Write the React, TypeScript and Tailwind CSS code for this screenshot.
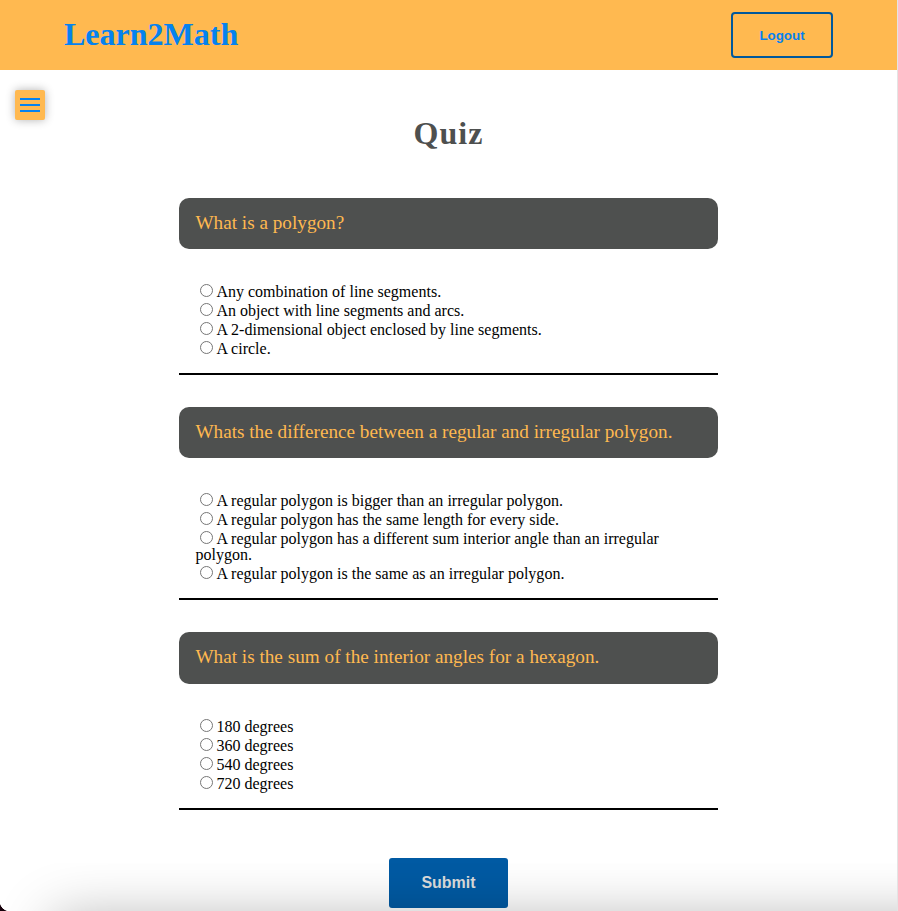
const questions = [
  {
    title: 'What is a polygon?',
    options: [
      'Any combination of line segments.',
      'An object with line segments and arcs.',
      'A 2-dimensional object enclosed by line segments.',
      'A circle.',
    ],
  },
  {
    title: 'Whats the difference between a regular and irregular polygon.',
    options: [
      'A regular polygon is bigger than an irregular polygon.',
      'A regular polygon has the same length for every side.',
      'A regular polygon has a different sum interior angle than an irregular polygon.',
      'A regular polygon is the same as an irregular polygon.',
    ],
  },
  {
    title: 'What is the sum of the interior angles for a hexagon.',
    options: ['180 degrees', '360 degrees', '540 degrees', '720 degrees'],
  },
];

function Header() {
  return (
    <header className="flex h-[70px] items-center justify-between bg-[#ffb950] px-16">
      <h1 className="pb-0.5 text-[32px] leading-8 font-bold text-[#0582ef]">Learn2Math</h1>
      <button className="h-[46px] w-[102px] rounded-[4px] border-2 border-[#00589c] pt-0.5 font-['Liberation_Sans',Arial,sans-serif] text-[13.33px] font-bold text-[#0582ef]">
        Logout
      </button>
    </header>
  );
}

function Question({ title, options, name }: { title: string; options: string[]; name: string }) {
  return (
    <section className="mb-8 border-b-2 border-black">
      <h3 className="rounded-[10px] bg-[#4e504f] px-4 pt-[15px] pb-[17px] text-[19.2px] leading-[19.2px] tracking-[0.01px] text-[#ffb950]">
        {title}
      </h3>
      <div className="px-4 pt-8 pb-4 text-base leading-4 tracking-[0.01px] text-black">
        {options.map((option) => (
          <label key={option} className="block [text-rendering:optimizeLegibility]">
            <input
              type="radio"
              name={name}
              className="mt-[3px] mr-[3px] mb-0 ml-[5px] size-[13px] appearance-none rounded-full border border-[#767676] bg-white align-baseline"
            />
            {option}
          </label>
        ))}
      </div>
    </section>
  );
}

export default function App() {
  return (
    <div className="relative h-[911px] overflow-hidden border-r border-[#e4e4e4] bg-white font-['Liberation_Serif','Times_New_Roman',serif]">
      <Header />
      <button
        aria-label="Menu"
        className="absolute top-[90px] left-[15px] flex size-[30px] flex-col items-center justify-center gap-1 rounded-[2px] bg-[#ffb950] shadow-[0_0_10px_rgba(0,0,0,0.3)]"
      >
        <span className="h-[2px] w-5 bg-[#0582ef]" />
        <span className="h-[2px] w-5 bg-[#0582ef]" />
        <span className="h-[2px] w-5 bg-[#0582ef]" />
      </button>
      <main className="mx-auto flex w-3/5 flex-col pt-[47px]">
        <h2 className="mb-[49px] text-center text-[32px] leading-8 font-bold tracking-[1px] text-[#4e504f]">Quiz</h2>
        {questions.map((q, i) => (
          <Question key={q.title} name={`question-${i}`} title={q.title} options={q.options} />
        ))}
        <button className="mt-4 h-[50px] w-[119px] self-center rounded-[3px] bg-[#005aa3] font-['Liberation_Sans',Arial,sans-serif] text-base font-bold text-[#dcdcdc]">
          Submit
        </button>
      </main>
      <div className="pointer-events-none absolute inset-x-0 bottom-0 h-12 overflow-hidden">
        <div className="absolute top-[54px] -right-20 left-[52px] h-24 rounded-[10px] shadow-[0_0_56px_rgba(0,0,0,0.29)]" />
      </div>
      <div className="pointer-events-none absolute bottom-0 left-0 size-[10px] bg-[radial-gradient(circle_at_100%_0,transparent_10px,#16000a_10.7px)]" />
    </div>
  );
}
